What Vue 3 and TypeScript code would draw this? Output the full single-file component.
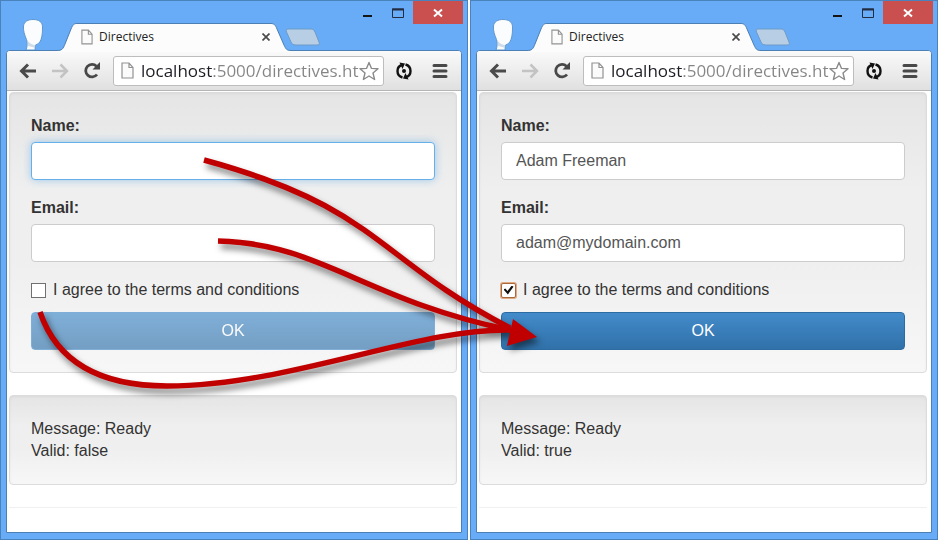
<script setup lang="ts">
import { reactive } from 'vue'

interface FormWindow {
  id: string
  name: string
  email: string
  agreed: boolean
  focus: 'name' | 'agreed'
  message: string
}

const windows = reactive<FormWindow[]>([
  { id: 'empty', name: '', email: '', agreed: false, focus: 'name', message: 'Ready' },
  { id: 'filled', name: 'Adam Freeman', email: 'adam@mydomain.com', agreed: true, focus: 'agreed', message: 'Ready' },
])

const url = 'localhost:5000/directives.ht'

function isValid(w: FormWindow): boolean {
  return w.name.trim() !== '' && w.email.includes('@') && w.agreed
}
</script>

<template>
  <main class="stage">
    <section v-for="w in windows" :key="w.id" class="window">
      <header class="titlebar">
        <svg class="avatar" viewBox="0 0 24 32" width="24" height="32" aria-hidden="true">
          <path d="M12 1.500C18 1.500 21.500 4 21.500 9C21.500 13 21.500 17 20 21.500C18.800 25 16.500 26.500 14.500 27L14 32H5C6.500 28 6.500 24.500 5.500 21.500C3.500 17 2 12 2.500 8C3.100 3.500 7 1.500 12 1.500Z" fill="#fbfcfd" stroke="#5f98d0" stroke-width="1" />
          <path d="M6 21.500C8 25.500 11.500 27 14.500 27L14 30C11.500 29 8.500 28.500 6.500 27.500Z" fill="#b9cede" opacity=".7" />
        </svg>
        <div class="tab">
          <svg class="tab-shape" viewBox="0 0 234 29" preserveAspectRatio="none" aria-hidden="true">
            <path d="M0 27.500C5 27.500 6 26 8 21L14 6C16 1.500 17 .5 20 .5H214C217 .5 218.500 2 220 6L227 22C229 26.500 230 27.500 234 27.500V29H0Z" fill="#fcfcfc" />
            <path d="M0 27.500C5 27.500 6 26 8 21L14 6C16 1.500 17 .5 20 .5H214C217 .5 218.500 2 220 6L227 22C229 26.500 230 27.500 234 27.500" fill="none" stroke="#4c7fb3" />
          </svg>
          <svg class="page-icon" viewBox="0 0 13 17" width="12" height="16" aria-hidden="true">
            <path d="M1 1H8L12 5.500V16H1Z M8 1V5.500H12" fill="#fbfbfb" stroke="#929292" stroke-width="1.200" />
          </svg>
          <span class="tab-title">Directives</span>
          <button class="tab-close" type="button" aria-label="Close tab">
            <svg viewBox="0 0 8 8" width="8" height="8"><path d="M.5 .5L7.500 7.500M7.500 .5L.5 7.500" stroke="#4b4b4b" stroke-width="1.700" /></svg>
          </button>
        </div>
        <button class="new-tab" type="button" aria-label="New tab">
          <svg viewBox="0 0 36 18" width="36" height="18">
            <path d="M3 1H26C28 1 29 2 30 4L34 14C35 16 34 17 32 17H11C8 17 7 16 6 14L1.500 4C1 2 1 1 3 1Z" fill="#b7cee4" stroke="#6d9cc8" />
          </svg>
        </button>
        <div class="controls">
          <button type="button" aria-label="Minimize">
            <svg viewBox="0 0 12 12" width="12" height="12"><path d="M1 9H10" stroke="#151515" stroke-width="2" /></svg>
          </button>
          <button type="button" aria-label="Maximize">
            <svg viewBox="0 0 12 12" width="12" height="12"><path d="M.5 2H11.500V10.500H.5Z" fill="none" stroke="#222d42" /><path d="M0 2.500H12" stroke="#222d42" stroke-width="2" /></svg>
          </button>
          <button class="close" type="button" aria-label="Close">
            <svg viewBox="0 0 10 10" width="10" height="10"><path d="M1 1.500L9 8.500M9 1.500L1 8.500" stroke="#fff" stroke-width="2" /></svg>
          </button>
        </div>
      </header>

      <div class="frame">
        <nav class="toolbar">
          <button type="button" aria-label="Back">
            <svg viewBox="0 0 18 16" width="18" height="16"><path d="M17 8H3M9 1.500L2.500 8L9 14.500" fill="none" stroke="#4a4a4a" stroke-width="3" /></svg>
          </button>
          <button type="button" aria-label="Forward">
            <svg viewBox="0 0 18 16" width="18" height="16"><path d="M1 8H15M9.500 1.500L16 8L9.500 14.500" fill="none" stroke="#c3c3c3" stroke-width="2.500" /></svg>
          </button>
          <button type="button" aria-label="Reload">
            <svg viewBox="0 0 18 17" width="18" height="17"><path d="M14 12.500A6.300 6.300 0 1 1 13.500 4.200" fill="none" stroke="#484848" stroke-width="2.800" /><path d="M17 0V7.500H9.500Z" fill="#484848" /></svg>
          </button>
          <div class="omnibox">
            <svg class="page-icon" viewBox="0 0 13 17" width="13" height="17" aria-hidden="true">
              <path d="M1 1H8L12 5.500V16H1Z M8 1V5.500H12" fill="#fbfbfb" stroke="#929292" stroke-width="1.200" />
            </svg>
            <input class="url" type="text" aria-label="Address" :value="url" spellcheck="false" />
            <button type="button" aria-label="Bookmark">
              <svg viewBox="0 0 20 20" width="20" height="20"><path d="M10 1.500L12.500 7.400L19 7.800L14 12L15.600 18.500L10 15L4.400 18.500L6 12L1 7.800L7.500 7.400Z" fill="#fff" stroke="#8a8a8a" stroke-width="1.400" stroke-linejoin="round" /></svg>
            </button>
          </div>
          <button class="extension" type="button" aria-label="Live reload">
            <svg viewBox="0 0 18 18" width="18" height="18">
              <path d="M7.500 15.500C4 14.500 2.500 12 2.500 9C2.500 6 4 3.800 7 3M10.500 2.500C14 3.500 15.500 6 15.500 9C15.500 12 14 14.200 11 15" fill="none" stroke="#111" stroke-width="2.400" />
              <path d="M4.500 .5L10 1.500L7.500 7Z M13.500 17.500L8 16.500L10.500 11Z" fill="#111" />
              <circle cx="9" cy="9" r="2" fill="#111" />
            </svg>
          </button>
          <button type="button" aria-label="Menu">
            <svg viewBox="0 0 16 16" width="16" height="16"><path d="M2 2.500H14M2 8H14M2 13.500H14" stroke="#484848" stroke-width="3" stroke-linecap="round" /></svg>
          </button>
        </nav>

        <div class="page">
          <form class="well" novalidate @submit.prevent>
            <div class="group">
              <label :for="`${w.id}-name`">Name:</label>
              <input :id="`${w.id}-name`" v-model="w.name" class="field" :class="{ focused: w.focus === 'name' }" type="text" />
            </div>
            <div class="group">
              <label :for="`${w.id}-email`">Email:</label>
              <input :id="`${w.id}-email`" v-model="w.email" class="field" type="email" />
            </div>
            <div class="check">
              <input :id="`${w.id}-agreed`" v-model="w.agreed" :class="{ focused: w.focus === 'agreed' }" type="checkbox" />
              <label :for="`${w.id}-agreed`">I agree to the terms and conditions</label>
            </div>
            <button class="submit" type="submit" :disabled="!isValid(w)">OK</button>
          </form>
          <div class="well">
            <div>Message: {{ w.message }}</div>
            <div>Valid: {{ isValid(w) }}</div>
          </div>
          <hr class="rule" />
        </div>
      </div>
    </section>

    <svg class="arrows" viewBox="0 0 938 540" preserveAspectRatio="none" aria-hidden="true">
      <g fill="none" stroke="#c00000" stroke-width="5.500">
        <path d="M204 160C380 208 375 258 510 328" />
        <path d="M218 241C320 243 365 300 510 330" />
        <path d="M40 312C58 365 105 386 167 386C290 386 420 327 512 330" />
      </g>
      <path d="M513 319L537 337L507 346Z" fill="#c00000" />
    </svg>
  </main>
</template>

<style>
body {
  margin: 0;
  background: #fff;
}
</style>

<style scoped>
.stage {
  position: relative;
  display: grid;
  grid-template-columns: 1fr 1fr;
  gap: 2px;
  min-height: 100vh;
  font: 16px/22px "Liberation Sans", Arial, sans-serif;
  color: #333;
}

button {
  padding: 0;
  border: 0;
  background: none;
  font: inherit;
}

svg {
  display: block;
}

.window {
  box-sizing: border-box;
  display: flex;
  flex-direction: column;
  min-width: 0;
  padding: 0 5px 6px;
  border: 1px solid #4a82bb;
  background: #68abf6;
}

.titlebar {
  display: flex;
  align-items: flex-end;
  height: 49px;
}

.avatar {
  margin-left: 15px;
}

.tab {
  position: relative;
  z-index: 1;
  box-sizing: border-box;
  display: flex;
  align-items: center;
  gap: 6px;
  flex: 0 1 234px;
  height: 28px;
  margin: 0 0 -1px 12px;
  padding: 0 21px 0 24px;
}

.tab-shape {
  position: absolute;
  inset: 0;
  width: 100%;
  height: 29px;
}

.page-icon,
.tab-title,
.tab-close {
  position: relative;
  flex: none;
}

.tab-title {
  font: 12px/16px "Open Sans", "Noto Sans", sans-serif;
  color: #222;
}

.tab-close {
  margin-left: auto;
}

.new-tab {
  margin: 0 0 4px -6px;
}

.controls {
  display: flex;
  align-self: flex-start;
  margin: 0 -1px 0 auto;
}

.controls button {
  display: grid;
  place-items: center;
  width: 30px;
  height: 23px;
}

.controls .close {
  width: 50px;
  background: #c9504f;
}

.frame {
  flex: 1;
  display: flex;
  flex-direction: column;
  border: 1px solid #4c7fb3;
  border-radius: 4px 4px 0 0;
  background: #fff;
}

.toolbar {
  display: flex;
  align-items: center;
  gap: 14px;
  height: 39px;
  padding: 0 13px 0 12px;
  border-bottom: 1px solid #b5b5b5;
  border-radius: 3px 3px 0 0;
  background: linear-gradient(#fafafa, #e0e0e0);
}

.omnibox {
  box-sizing: border-box;
  display: flex;
  align-items: center;
  gap: 7px;
  flex: 1;
  min-width: 0;
  height: 30px;
  margin: 0 -3px 0 -2px;
  padding: 0 4px 0 7px;
  border: 1px solid #bdbdbd;
  border-radius: 3px;
  background: #fff;
}

.extension {
  margin-right: 5px;
}

.url {
  flex: 1;
  min-width: 0;
  margin-right: -7px;
  padding: 0;
  border: 0;
  outline: 0;
  font: 17px/24px "Open Sans", "Noto Sans", sans-serif;
  color: transparent;
  background: linear-gradient(90deg, #1c1c24 72px, #858585 72px);
  background-clip: text;
}

.page {
  flex: 1;
  padding: 1px 4px 0 2px;
}

.well {
  margin-bottom: 22px;
  padding: 22px 21px;
  border: 1px solid #dcdcdc;
  border-radius: 4px;
  background: linear-gradient(#e5e5e5, #efefef 35%, #efefef 60%, #f7f7f7);
  box-shadow: inset 0 1px 3px rgba(0, 0, 0, 0.05);
}

.group {
  display: flex;
  flex-direction: column;
  gap: 5px;
  margin-bottom: 17px;
}

.group label {
  font-weight: bold;
}

.field {
  box-sizing: border-box;
  width: 100%;
  height: 38px;
  padding: 0 14px;
  border: 1px solid #ccc;
  border-radius: 4px;
  outline: 0;
  background: #fff;
  font: inherit;
  color: #555;
}

.field.focused {
  border-color: #66afe9;
  box-shadow: 0 0 8px rgba(102, 175, 233, 0.6);
}

.check {
  display: flex;
  align-items: center;
  gap: 7px;
  margin-bottom: 11px;
}

.check input {
  display: grid;
  place-items: center;
  box-sizing: border-box;
  width: 15px;
  height: 15px;
  margin: 0;
  appearance: none;
  border: 1px solid #707070;
  background: #fff;
}

.check .focused {
  border-color: #a86a3c;
  border-radius: 2px;
  box-shadow: 0 0 0 1px #dfa981;
}

.check input:checked::after {
  content: "";
  width: 10px;
  height: 9px;
  background: #111;
  clip-path: polygon(0 45%, 18% 32%, 40% 62%, 82% 0, 100% 14%, 44% 100%);
}

.submit {
  box-sizing: border-box;
  display: block;
  width: 100%;
  height: 38px;
  border: 1px solid #2d6ca2;
  border-radius: 4px;
  background: linear-gradient(#428bca, #3071a9);
  color: #fff;
}

.submit:disabled {
  opacity: 0.65;
  border-color: #428bca;
}

.rule {
  margin: 0;
  border: 0;
  border-top: 1px solid #f0f0f0;
}

.arrows {
  position: absolute;
  inset: 0;
  z-index: 2;
  width: 100%;
  height: 100%;
  pointer-events: none;
  filter: drop-shadow(3px 5px 3px rgba(0, 0, 0, 0.5));
}
</style>
